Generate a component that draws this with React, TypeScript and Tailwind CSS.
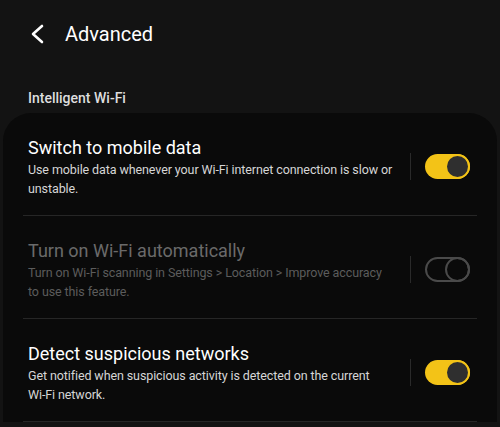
import React from "react";

type Row = {
  title: string;
  lines: string[];
  on: boolean;
  disabled?: boolean;
};

const rows: Row[] = [
  {
    title: "Switch to mobile data",
    lines: ["Use mobile data whenever your Wi-Fi internet connection is slow or", "unstable."],
    on: true,
  },
  {
    title: "Turn on Wi-Fi automatically",
    lines: ["Turn on Wi-Fi scanning in Settings > Location > Improve accuracy", "to use this feature."],
    on: false,
    disabled: true,
  },
  {
    title: "Detect suspicious networks",
    lines: ["Get notified when suspicious activity is detected on the current", "Wi-Fi network."],
    on: true,
  },
];

function Toggle({ on, disabled }: { on: boolean; disabled?: boolean }) {
  if (on) {
    return (
      <div className="flex h-[25px] w-[45px] items-center justify-end rounded-full bg-[#f3c317]">
        <div className="h-[25px] w-[25px] rounded-full border-[2px] border-[#f3c317] bg-[#2f2f2f]" />
      </div>
    );
  }
  return (
    <div
      className={`flex h-[25px] w-[45px] items-center justify-end rounded-full border-[2px] ${
        disabled ? "border-[#4a4a4a]" : "border-[#888]"
      }`}
    >
      <div className={`h-[25px] w-[25px] -mr-[2px] rounded-full border-[2px] ${disabled ? "border-[#4a4a4a]" : "border-[#888]"}`} />
    </div>
  );
}

export default function App() {
  return (
    <div className="h-[427px] w-[500px] overflow-hidden bg-[#131313] font-['Roboto',sans-serif]">
      {/* Header */}
      <div className="flex h-[68px] items-center pl-[29px]">
        <svg width="16" height="20" viewBox="0 0 16 20" fill="none">
          <path d="M13 2 L4 10 L13 18" stroke="#fff" strokeWidth="2.6" strokeLinecap="round" strokeLinejoin="round" />
        </svg>
        <span className="ml-[20px] text-[20px] text-white">Advanced</span>
      </div>

      {/* Section label */}
      <div className="pl-[28px] pt-[20px] text-[14px] font-medium text-[#dedede]">Intelligent Wi-Fi</div>

      {/* Card */}
      <div className="mx-[3px] mt-[4px] rounded-t-[28px] bg-[#0a0a0a]">
        {rows.map((r, i) => (
          <div key={i}>
            <div className="flex items-center pl-[25px] pr-[27px] pt-[22px] pb-[17px]">
              <div className={`flex-1 ${r.disabled ? "text-[#6a6a6a]" : "text-white"}`}>
                <div className="text-[18px] leading-[25px]">{r.title}</div>
                <div
                  className={`text-[12.5px] leading-[19px] tracking-[-0.1px] ${
                    r.disabled ? "text-[#5c5c5c]" : "text-[#d6d6d6]"
                  }`}
                >
                  {r.lines.map((l, j) => (
                    <div key={j} className="whitespace-nowrap">
                      {l}
                    </div>
                  ))}
                </div>
              </div>
              <div className="mx-[14px] h-[27px] w-px bg-[#2a2a2a]" />
              <Toggle on={r.on} disabled={r.disabled} />
            </div>
            <div className="mx-[20px] h-px bg-[#262626]" />
          </div>
        ))}
      </div>
    </div>
  );
}
